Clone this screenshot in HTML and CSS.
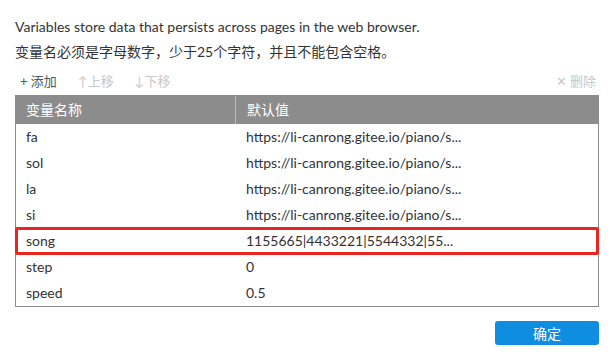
FILE: index.html
```html
<!DOCTYPE html>
<html lang="zh">
<head>
    <meta charset="UTF-8">
    <title>变量</title>
    <link rel="stylesheet" href="styles.css">
</head>
<body>
    <div class="dialog">
        <p class="hint">Variables store data that persists across pages in the web browser.</p>
        <p class="hint">变量名必须是字母数字，少于25个字符，并且不能包含空格。</p>

        <div class="toolbar">
            <span class="tool">+ 添加</span>
            <span class="tool disabled">↑上移</span>
            <span class="tool disabled">↓下移</span>
            <span class="tool disabled right">✕ 删除</span>
        </div>

        <div class="table">
            <div class="row head">
                <div class="cell name">变量名称</div>
                <div class="cell value">默认值</div>
            </div>
            <div class="row"><div class="cell name">fa</div><div class="cell value">https://li-canrong.gitee.io/piano/s...</div></div>
            <div class="row"><div class="cell name">sol</div><div class="cell value">https://li-canrong.gitee.io/piano/s...</div></div>
            <div class="row"><div class="cell name">la</div><div class="cell value">https://li-canrong.gitee.io/piano/s...</div></div>
            <div class="row"><div class="cell name">si</div><div class="cell value">https://li-canrong.gitee.io/piano/s...</div></div>
            <div class="row marked"><div class="cell name">song</div><div class="cell value">1155665|4433221|5544332|55...</div></div>
            <div class="row"><div class="cell name">step</div><div class="cell value">0</div></div>
            <div class="row"><div class="cell name">speed</div><div class="cell value">0.5</div></div>
        </div>

        <div class="footer">
            <button class="ok">确定</button>
        </div>
    </div>
</body>
</html>
```

FILE: styles.css
```css
body {
    margin: 0;
    font-family: Lato, "Noto Sans CJK SC", sans-serif;
    font-size: 14px;
    color: #333;
    background: #fff;
}
.dialog {
    padding: 14px 16px 0 15px;
}
.hint {
    margin: 0;
    line-height: 25px;
}
.toolbar {
    display: flex;
    gap: 21px;
    padding: 5px 0 0 5px;
    height: 26px;
    line-height: 24px;
    font-size: 13px;
}
.tool {
    color: #555;
}
.tool.disabled {
    color: #c8c8c8;
}
.tool.right {
    margin-left: auto;
    padding-right: 2px;
}
.table {
    border: 1px solid #8c8c8c;
    width: 582px;
}
.row {
    display: flex;
    height: 26px;
    line-height: 26px;
    position: relative;
}
.row.head {
    background: #8c8c8c;
    color: #fff;
    height: 28px;
    line-height: 28px;
}
.cell {
    padding-left: 10px;
}
.cell.name {
    width: 209px;
}
.head .cell.name {
    border-right: 1px solid #bdbdbd;
}
.cell.value {
    padding-left: 11px;
}
.row.marked::after {
    content: "";
    position: absolute;
    left: -1px;
    right: -1px;
    top: -1px;
    bottom: -1px;
    border: 3px solid #e8251f;
    border-radius: 2px;
}
.footer {
    display: flex;
    justify-content: flex-end;
    padding-top: 14px;
    width: 584px;
}
.ok {
    width: 104px;
    height: 24px;
    background: #0f8de0;
    color: #fff;
    border: none;
    border-radius: 3px;
    font-family: inherit;
    font-size: 14px;
}
```
